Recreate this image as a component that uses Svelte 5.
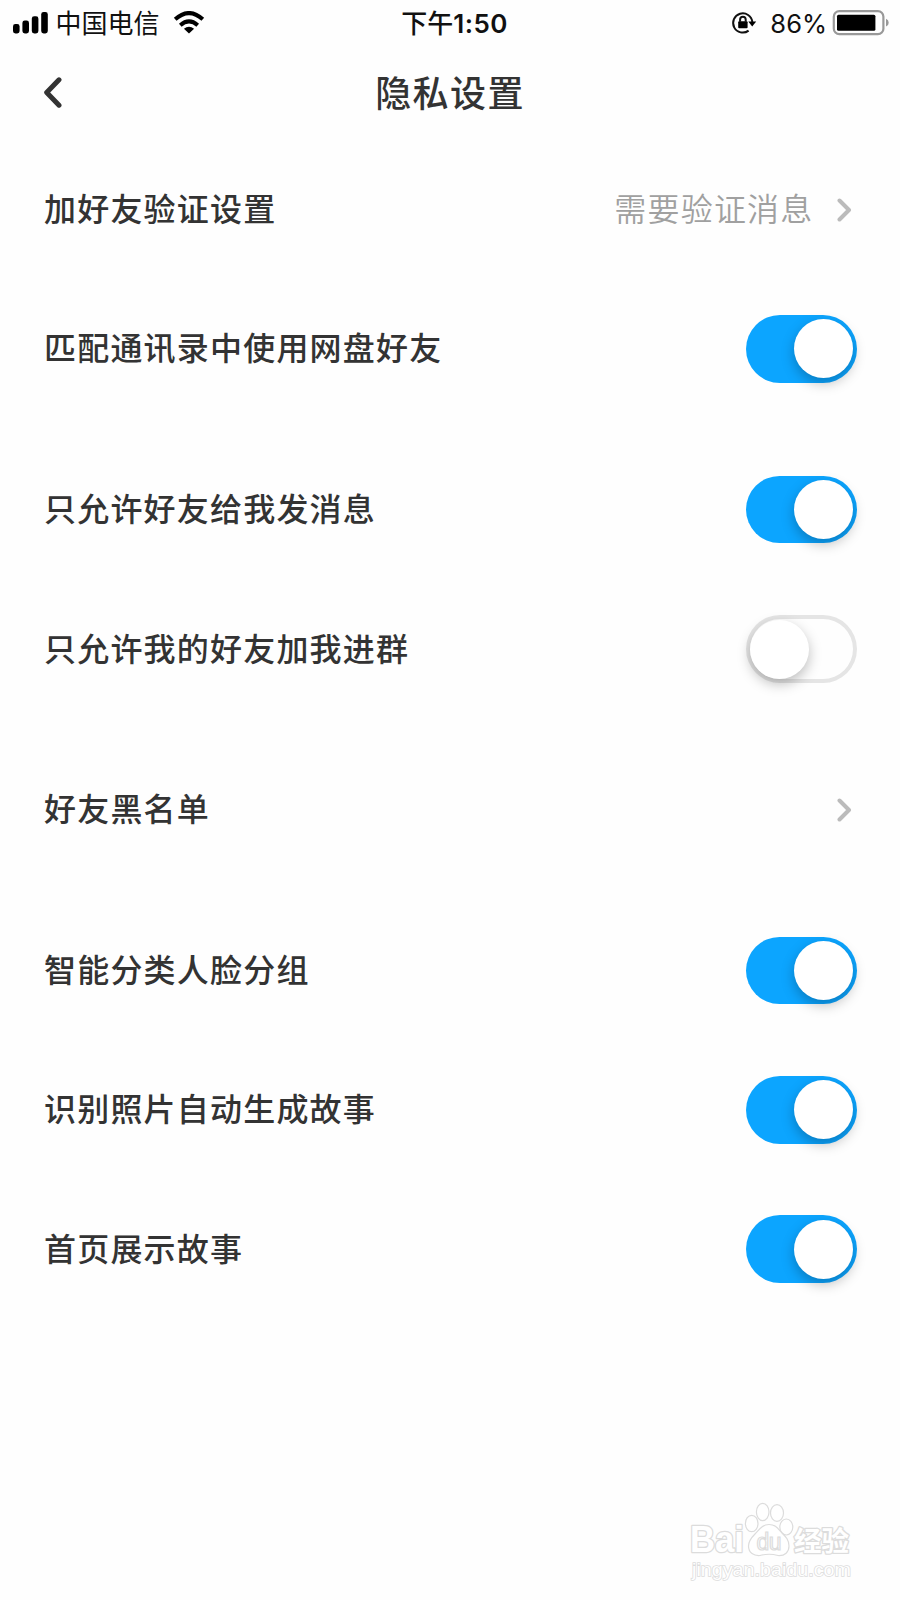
<script lang="ts">
	type Row = { label: string; value?: string; on?: boolean };

	let groups: Row[][] = $state([
		[
			{ label: '加好友验证设置', value: '需要验证消息' },
			{ label: '匹配通讯录中使用网盘好友', on: true }
		],
		[
			{ label: '只允许好友给我发消息', on: true },
			{ label: '只允许我的好友加我进群', on: false }
		],
		[{ label: '好友黑名单' }],
		[
			{ label: '智能分类人脸分组', on: true },
			{ label: '识别照片自动生成故事', on: true },
			{ label: '首页展示故事', on: true }
		]
	]);
</script>

<div class="screen">
	<div class="status">
		<div class="carrier">
			<svg class="signal" width="36" height="22" viewBox="0 0 36 22">
				<rect x="0" y="12" width="6.6" height="9.5" rx="2.4" />
				<rect x="9.4" y="8.6" width="6.6" height="12.9" rx="2.4" />
				<rect x="18.8" y="4.3" width="6.6" height="17.2" rx="2.4" />
				<rect x="28.2" y="0" width="6.6" height="21.5" rx="2.4" />
			</svg>
			<span class="name">中国电信</span>
			<svg class="wifi" width="32" height="24" viewBox="0 0 32 24">
				<path class="arc" d="M2.2 8.3Q16 -4.2 29.8 8.3" />
				<path class="arc" d="M7.3 14.2Q16 6.4 24.7 14.2" />
				<path d="M10.9 17.8Q16 13.9 21.1 17.8L16 22.6Z" />
			</svg>
		</div>
		<span class="time">下午<b>1:50</b></span>
		<div class="power">
			<svg class="lock" width="26" height="24" viewBox="0 0 26 24">
				<path class="ring" d="M17.6 19.6A9.6 9.6 0 1 1 21.3 11" />
				<path d="M17.3 10.5H25.2L21.2 15.4Z" />
				<rect x="7.2" y="10.3" width="9.4" height="7" rx="1" />
				<path class="shackle" d="M9.1 10.8V8.6A2.8 2.8 0 0 1 14.7 8.6V10.8" />
			</svg>
			<span class="percent">86%</span>
			<svg class="battery" width="57" height="26" viewBox="0 0 57 26">
				<rect class="shell" x="1.8" y="1.2" width="49.6" height="23" rx="5.5" />
				<rect x="5" y="4.8" width="38.4" height="16" rx="1.5" />
				<path class="cap" d="M54 8.8Q56.7 9.8 56.7 12.7Q56.7 15.6 54 16.6Z" />
			</svg>
		</div>
	</div>

	<header>
		<button class="back" aria-label="返回">
			<svg width="18" height="31" viewBox="0 0 18 31">
				<path d="M15 2.8L2.7 15.5L15 28.2" />
			</svg>
		</button>
		<h1>隐私设置</h1>
	</header>

	<main>
		{#each groups as group}
			<section>
				{#each group as row}
					<div class="row">
						<span class="label">{row.label}</span>
						{#if row.on !== undefined}
							<button
								class="toggle"
								class:on={row.on}
								role="switch"
								aria-checked={row.on}
								aria-label={row.label}
								onclick={() => (row.on = !row.on)}
							>
								<span class="knob"></span>
							</button>
						{:else}
							<span class="value">{row.value ?? ''}</span>
							<svg class="chevron" width="15" height="24" viewBox="0 0 15 24">
								<path d="M2.5 2.5L12 12L2.5 21.5" />
							</svg>
						{/if}
					</div>
				{/each}
			</section>
		{/each}
	</main>

	<svg class="watermark" width="170" height="90" viewBox="0 0 170 90">
		<g class="outline">
			<text class="bai" x="3" y="54" textLength="54" lengthAdjust="spacingAndGlyphs">Bai</text>
			<ellipse cx="64.7" cy="25.5" rx="6.3" ry="8.2" />
			<ellipse cx="75.7" cy="14" rx="6.3" ry="8.6" />
			<ellipse cx="90" cy="15" rx="6.5" ry="8.3" />
			<ellipse cx="99.3" cy="29" rx="6.5" ry="8" />
			<path d="M82 26.5C75 26.5 72 32 68 36C64 40 61.5 43 61.5 48C61.5 55 67 58 73 57.5Q82 55 91 57.5C98 58 102 54 102 48C102 42 99 39 95 35C91 31 89 26.5 82 26.5Z" />
			<text class="du" x="69.5" y="52" textLength="25">du</text>
			<text class="jing" x="107" y="52.5" textLength="55" lengthAdjust="spacingAndGlyphs">经验</text>
		</g>
		<text class="url" x="5" y="78" textLength="159" lengthAdjust="spacingAndGlyphs">jingyan.baidu.com</text>
	</svg>
</div>

<style>
	:global(body) {
		background: #fefefe;
	}
	.screen {
		position: relative;
		width: 900px;
		height: 1600px;
		overflow: hidden;
		background: #fefefe;
		color: #333;
		font-family: 'Inter', 'Noto Sans CJK SC', sans-serif;
	}
	button {
		padding: 0;
		border: none;
		background: none;
		cursor: pointer;
	}
	svg {
		display: block;
		flex: none;
	}
	.status {
		display: grid;
		grid-template-columns: 1fr auto 1fr;
		align-items: center;
		height: 45px;
		padding: 0 11px 0 13px;
		box-sizing: border-box;
		color: #111;
		font-size: 26px;
		line-height: 45px;
	}
	.carrier,
	.power {
		display: flex;
		align-items: center;
	}
	.power {
		justify-content: flex-end;
	}
	.signal {
		margin-right: 6.5px;
	}
	.name {
		padding-top: 2px;
		line-height: 44px;
	}
	.wifi {
		margin-left: 13.5px;
	}
	.wifi .arc {
		fill: none;
		stroke: #000;
		stroke-width: 4;
	}
	.time {
		padding: 1px 0 0 7px;
		line-height: 44px;
		font-weight: 500;
	}
	.time b {
		font-weight: 600;
		letter-spacing: 0.4px;
	}
	.lock .ring,
	.lock .shackle {
		fill: none;
		stroke: #111;
		stroke-width: 2;
	}
	.percent {
		margin: 0 5px 0 13.5px;
		font-size: 25.5px;
	}
	.battery .shell {
		fill: none;
		stroke: #999;
		stroke-width: 2.2;
	}
	.battery .cap {
		fill: #999;
	}
	header {
		display: grid;
		grid-template-columns: 1fr auto 1fr;
		align-items: center;
		height: 95px;
		padding: 0 44px;
	}
	.back {
		justify-self: start;
	}
	.back path {
		fill: none;
		stroke: #333;
		stroke-width: 5;
		stroke-linecap: round;
		stroke-linejoin: round;
	}
	h1 {
		margin: 0;
		padding-bottom: 3px;
		font-size: 36px;
		font-weight: 500;
		letter-spacing: 1.4px;
	}
	main {
		display: flex;
		flex-direction: column;
		gap: 21.5px;
	}
	.row {
		display: flex;
		align-items: center;
		height: 139.3px;
		padding: 0 43px 0 44px;
	}
	.label,
	.value {
		padding-bottom: 5px;
		font-size: 32px;
		letter-spacing: 1.2px;
		white-space: nowrap;
	}
	.label {
		flex: 1;
		font-weight: 500;
	}
	.value {
		margin-right: 23px;
		color: #a0a0a0;
		font-weight: 350;
	}
	.chevron {
		margin-right: 5.5px;
	}
	.chevron path {
		fill: none;
		stroke: #bbb;
		stroke-width: 4;
		stroke-linecap: round;
		stroke-linejoin: round;
	}
	.toggle {
		display: flex;
		align-items: center;
		width: 111px;
		height: 67.5px;
		padding: 0 4px;
		border-radius: 34px;
		box-shadow: inset 0 0 0 4px #e5e5e5;
	}
	.toggle.on {
		justify-content: flex-end;
		background: #0ca5ff;
		box-shadow: none;
	}
	.knob {
		width: 59px;
		height: 59px;
		border-radius: 50%;
		background: #fff;
		box-shadow: 0 5px 13px rgba(0, 0, 0, 0.26);
	}
	.watermark {
		position: absolute;
		left: 687px;
		top: 1498px;
	}
	.watermark text {
		font-family: 'Liberation Sans', 'Noto Sans CJK SC', sans-serif;
	}
	.outline {
		fill: #fff;
		stroke: #dcdcdc;
		stroke-width: 1.2;
	}
	.bai {
		font-size: 37px;
		font-weight: bold;
	}
	.du {
		font-size: 23px;
	}
	/* stroke goes under the fill so that crossing strokes leave no inner lines */
	.bai,
	.jing {
		stroke-width: 2.6;
		stroke-linejoin: round;
		paint-order: stroke;
	}
	.jing {
		font-size: 27px;
		font-weight: 700;
	}
	.url {
		fill: #fff;
		stroke: #dcdcdc;
		stroke-width: 1.5;
		paint-order: stroke;
		font-size: 19px;
	}
</style>
